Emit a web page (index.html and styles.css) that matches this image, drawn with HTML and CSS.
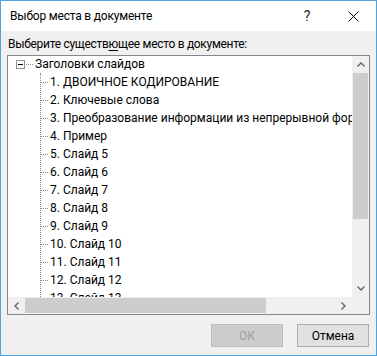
FILE: index.html
```html
<!DOCTYPE html>
<html lang="ru">
<head>
    <meta charset="UTF-8">
    <title>Выбор места в документе</title>
    <link rel="stylesheet" href="styles.css">
</head>
<body>
    <div class="dialog">
        <div class="titlebar">
            <div class="title">Выбор места в документе</div>
            <div class="caption-btn help">?</div>
            <div class="caption-btn close">
                <svg width="11" height="11" viewBox="0 0 11 11"><path d="M0.5 0.5L10.5 10.5M10.5 0.5L0.5 10.5" stroke="#000" stroke-width="1" fill="none"/></svg>
            </div>
        </div>

        <div class="content">
            <div class="label">Выберите существ<u>ю</u>щее место в документе:</div>

            <div class="tree">
                <div class="tree-view">
                    <div class="node root">
                        <span class="expander"><span class="minus"></span></span>
                        <span class="dots"></span>
                        <span class="node-text">Заголовки слайдов</span>
                    </div>
                    <div class="children">
                        <div class="node"><span class="dots"></span><span class="node-text">1. ДВОИЧНОЕ КОДИРОВАНИЕ</span></div>
                        <div class="node"><span class="dots"></span><span class="node-text">2. Ключевые слова</span></div>
                        <div class="node"><span class="dots"></span><span class="node-text">3. Преобразование информации из непрерывной формы в дискретную</span></div>
                        <div class="node"><span class="dots"></span><span class="node-text">4. Пример</span></div>
                        <div class="node"><span class="dots"></span><span class="node-text">5. Слайд 5</span></div>
                        <div class="node"><span class="dots"></span><span class="node-text">6. Слайд 6</span></div>
                        <div class="node"><span class="dots"></span><span class="node-text">7. Слайд 7</span></div>
                        <div class="node"><span class="dots"></span><span class="node-text">8. Слайд 8</span></div>
                        <div class="node"><span class="dots"></span><span class="node-text">9. Слайд 9</span></div>
                        <div class="node"><span class="dots"></span><span class="node-text">10. Слайд 10</span></div>
                        <div class="node"><span class="dots"></span><span class="node-text">11. Слайд 11</span></div>
                        <div class="node"><span class="dots"></span><span class="node-text">12. Слайд 12</span></div>
                        <div class="node"><span class="dots"></span><span class="node-text">13. Слайд 13</span></div>
                        <div class="node"><span class="dots"></span><span class="node-text">14. Слайд 14</span></div>
                    </div>
                </div>

                <div class="vscroll">
                    <div class="sb-btn">
                        <svg width="8" height="5" viewBox="0 0 8 5"><path d="M0.5 4.5L4 1L7.5 4.5" stroke="#606060" stroke-width="1.3" fill="none"/></svg>
                    </div>
                    <div class="vthumb"></div>
                    <div class="sb-track"></div>
                    <div class="sb-btn">
                        <svg width="8" height="5" viewBox="0 0 8 5"><path d="M0.5 0.5L4 4L7.5 0.5" stroke="#606060" stroke-width="1.3" fill="none"/></svg>
                    </div>
                </div>

                <div class="hscroll">
                    <div class="sb-btn">
                        <svg width="5" height="8" viewBox="0 0 5 8"><path d="M4.5 0.5L1 4L4.5 7.5" stroke="#606060" stroke-width="1.3" fill="none"/></svg>
                    </div>
                    <div class="hthumb"></div>
                    <div class="sb-track"></div>
                    <div class="sb-btn">
                        <svg width="5" height="8" viewBox="0 0 5 8"><path d="M0.5 0.5L4 4L0.5 7.5" stroke="#606060" stroke-width="1.3" fill="none"/></svg>
                    </div>
                </div>

                <div class="corner"></div>
            </div>

            <div class="buttons">
                <button class="btn" disabled>ОК</button>
                <button class="btn">Отмена</button>
            </div>
        </div>
    </div>
</body>
</html>
```

FILE: styles.css
```css
body {
    margin: 0;
    font-family: Roboto, "Noto Sans", sans-serif;
    font-size: 12px;
    color: #000;
}
.dialog {
    width: 377px;
    height: 356px;
    box-sizing: border-box;
    border: 1px solid #4fa3de;
    background: #f0f0f0;
    display: flex;
    flex-direction: column;
}
.titlebar {
    height: 30px;
    background: #fff;
    display: flex;
    align-items: center;
}
.title {
    flex: 1;
    padding-left: 9px;
    font-size: 12px;
    letter-spacing: -0.2px;
}
.caption-btn {
    width: 46px;
    height: 30px;
    display: flex;
    align-items: center;
    justify-content: center;
}
.help {
    font-size: 14px;
    color: #222;
}
.content {
    flex: 1;
    padding: 5px 6px 0 6px;
    display: flex;
    flex-direction: column;
}
.label {
    line-height: 16px;
    padding-left: 1px;
    letter-spacing: -0.3px;
}
.label u {
    text-underline-offset: 2px;
}
.tree {
    margin-top: 3px;
    height: 260px;
    box-sizing: border-box;
    border: 1px solid #828790;
    background: #fff;
    display: grid;
    grid-template-columns: 1fr 17px;
    grid-template-rows: 1fr 17px;
    overflow: hidden;
}
.tree-view {
    overflow: hidden;
    white-space: nowrap;
}
.node {
    height: 18px;
    display: flex;
    align-items: center;
}
.root {
    margin-top: -1px;
    padding-left: 8px;
}
.expander {
    width: 9px;
    height: 9px;
    box-sizing: border-box;
    border: 1px solid #919191;
    display: flex;
    align-items: center;
    justify-content: center;
}
.minus {
    width: 5px;
    height: 1px;
    background: #000;
}
.dots {
    width: 7px;
    flex: none;
    border-top: 1px dotted #8a8a8a;
    margin-right: 2px;
}
.root .dots {
    margin-left: 1px;
}
.node-text {
    line-height: 18px;
}
.children {
    margin-left: 32px;
    border-left: 1px dotted #8a8a8a;
}
.vscroll {
    background: #f0f0f0;
    display: flex;
    flex-direction: column;
}
.hscroll {
    background: #f0f0f0;
    display: flex;
}
.sb-btn {
    width: 17px;
    height: 17px;
    flex: none;
    display: flex;
    align-items: center;
    justify-content: center;
}
.sb-track {
    flex: 1;
}
.vthumb {
    height: 146px;
    margin: 0 1px;
    background: #cdcdcd;
}
.hthumb {
    width: 241px;
    margin: 1px 0;
    background: #cdcdcd;
}
.corner {
    background: #f0f0f0;
}
.buttons {
    margin-top: 9px;
    margin-right: 1px;
    display: flex;
    justify-content: flex-end;
    gap: 14px;
}
.btn {
    width: 72px;
    height: 23px;
    box-sizing: border-box;
    font-family: inherit;
    font-size: 12px;
    background: #e1e1e1;
    border: 1px solid #adadad;
    border-radius: 0;
    color: #000;
    padding: 0;
}
.btn:disabled {
    background: #cccccc;
    border-color: #bfbfbf;
    color: #a0a0a0;
}
```
